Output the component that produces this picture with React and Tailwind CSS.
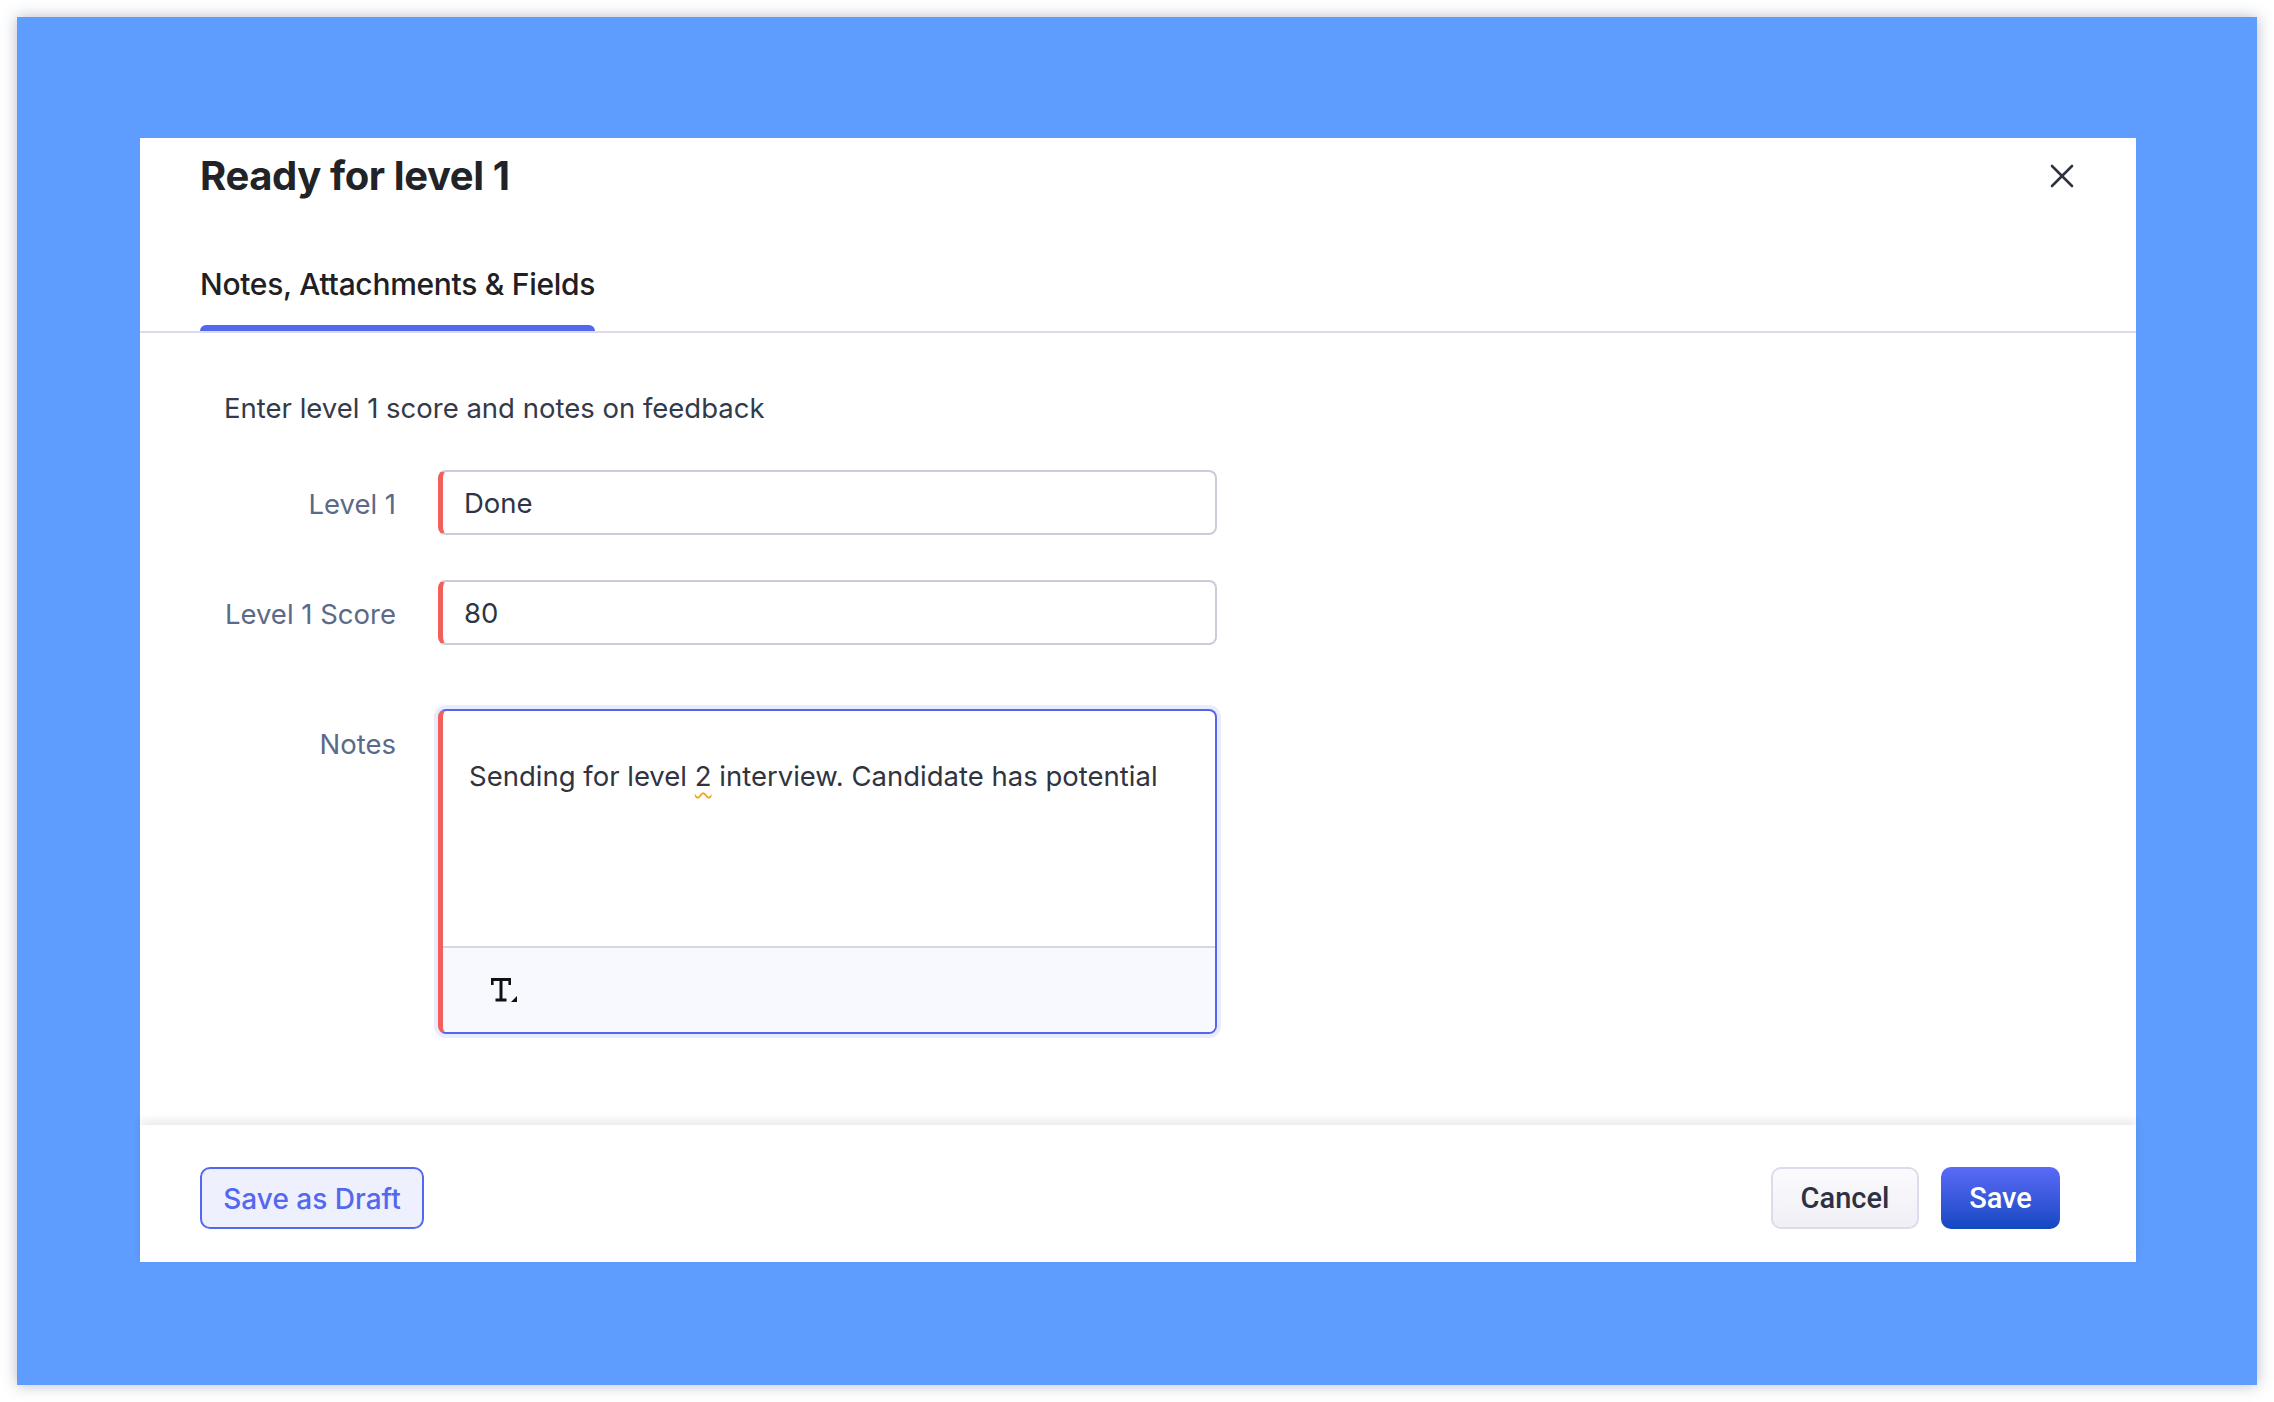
import React from "react";

function CloseIcon() {
  return (
    <svg width="24" height="24" viewBox="0 0 24 24" fill="none" stroke="#2e3340" strokeWidth="2.6" strokeLinecap="round">
      <path d="M2 2 L22 22" />
      <path d="M22 2 L2 22" />
    </svg>
  );
}

function TextFormatIcon() {
  return (
    <svg width="26" height="25" viewBox="0 0 26 25" fill="#111">
      <rect x="0" y="0" width="20" height="3" />
      <rect x="0" y="0" width="2.6" height="7" />
      <rect x="17.4" y="0" width="2.6" height="7" />
      <rect x="8.5" y="0" width="3" height="23" />
      <rect x="4.5" y="20.5" width="11" height="3" />
      <polygon points="26,18 26,24 20,24" />
    </svg>
  );
}

export default function App() {
  const font = { fontFamily: "Inter, 'Noto Sans', sans-serif" };
  return (
    <div className="w-[2274px] h-[1402px] bg-white p-[17px]" style={font}>
      <div className="w-full h-full bg-[#5e9dfd] shadow-[0_0_14px_rgba(40,60,90,0.35)] pl-[123px] pt-[121px]">
        <div className="w-[1996px] h-[1124px] bg-white flex flex-col">
          {/* Header */}
          <div className="pl-[60px] pr-[62px] pt-[14px]">
            <div className="flex items-center justify-between h-[48px]">
              <h1 className="text-[40px] leading-[48px] font-bold text-[#222326] tracking-[-0.4px]">Ready for level 1</h1>
              <CloseIcon />
            </div>
          </div>
          {/* Tabs */}
          <div className="mt-[64px] border-b-2 border-[#dddaec] px-[60px] flex">
            <div className="flex flex-col">
              <span className="text-[30px] leading-[40px] text-[#1f2023] font-medium tracking-[-0.3px]">Notes, Attachments &amp; Fields</span>
              <div className="mt-[21px] h-[6px] rounded-t-[6px] bg-[#5467ef]"></div>
            </div>
          </div>
          {/* Content */}
          <div className="flex-1 pt-[55px]">
            <div className="pl-[84px] text-[27.5px] leading-[40px] text-[#333a4a]">Enter level 1 score and notes on feedback</div>
            <div className="mt-[42px] flex items-center">
              <div className="w-[256px] pt-[3px] text-right text-[27.5px] leading-[40px] text-[#5b6a88]">Level 1</div>
              <div className="ml-[42px] w-[779px] h-[65px] rounded-[8px] border-2 border-[#cbcbd9] border-l-[5px] border-l-[#f25f5c] bg-white flex items-center pt-[3px] pl-[21px] text-[27.5px] text-[#2d3446]">Done</div>
            </div>
            <div className="mt-[45px] flex items-center">
              <div className="w-[256px] pt-[3px] text-right text-[27.5px] leading-[40px] text-[#5b6a88]">Level 1 Score</div>
              <div className="ml-[42px] w-[779px] h-[65px] rounded-[8px] border-2 border-[#cbcbd9] border-l-[5px] border-l-[#f25f5c] bg-white flex items-center pt-[3px] pl-[21px] text-[27.5px] text-[#2d3446]">80</div>
            </div>
            <div className="mt-[64px] flex items-start">
              <div className="w-[256px] mt-[15px] text-right text-[27.5px] leading-[40px] text-[#5b6a88]">Notes</div>
              <div className="ml-[42px] w-[779px] h-[325px] rounded-[8px] border-2 border-[#5466ee] border-l-[5px] border-l-[#f25f5c] bg-white overflow-hidden flex flex-col shadow-[0_0_0_4px_rgba(84,102,238,0.12)]">
                <div className="h-[235px] pt-[45px] pl-[26px] text-[27.5px] leading-[40px] text-[#30343f]">
                  Sending for level <span className="underline decoration-wavy decoration-[#f2a623] decoration-[1.5px] underline-offset-[6px]">2</span> interview. Candidate has potential
                </div>
                <div className="flex-1 border-t-2 border-[#d5d7e2] bg-[#f8f9ff] flex items-center pl-[48px]">
                  <TextFormatIcon />
                </div>
              </div>
            </div>
          </div>
          {/* Footer */}
          <div className="h-[137px] shadow-[0_-5px_8px_rgba(0,0,0,0.08)] flex items-start justify-between pl-[60px] pr-[76px] pt-[42px]">
            <button className="h-[62px] w-[224px] rounded-[10px] border-2 border-[#5468ee] bg-[#eef0fd] text-[#5468ee] text-[28px] font-medium pt-[2px]">Save as Draft</button>
            <div className="flex gap-[22px]">
              <button className="h-[62px] w-[148px] rounded-[10px] border-2 border-[#dcdcea] bg-gradient-to-b from-[#fbfbfd] to-[#efeff6] text-[#2d3142] text-[29px] font-medium pt-[2px]" style={{ fontFamily: "Roboto, sans-serif" }}>Cancel</button>
              <button className="h-[62px] w-[119px] rounded-[10px] bg-gradient-to-b from-[#5a6af7] to-[#1148c2] text-white text-[29px] font-medium pt-[2px]" style={{ fontFamily: "Roboto, sans-serif" }}>Save</button>
            </div>
          </div>
        </div>
      </div>
    </div>
  );
}
